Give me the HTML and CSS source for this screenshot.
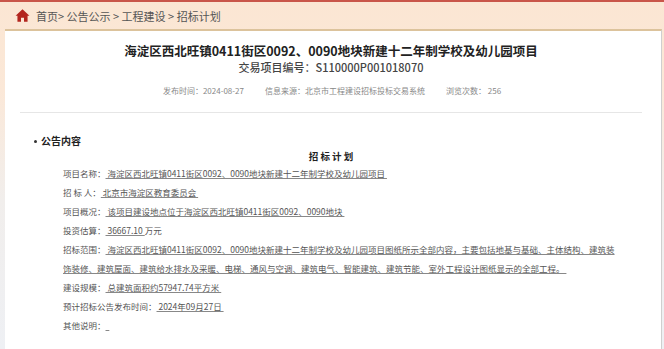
FILE: index.html
```html
<!DOCTYPE html>
<html lang="zh">
<head>
<meta charset="utf-8">
<title>招标计划</title>
<link rel="stylesheet" href="styles.css">
</head>
<body>
<div class="topline"></div>
<div class="crumb">
  <svg class="home" viewBox="0 0 16 16" width="15" height="15"><path d="M8 1.2 L0.6 8.2 L2.6 8.2 L2.6 14.6 L6.4 14.6 L6.4 10.4 L9.6 10.4 L9.6 14.6 L13.4 14.6 L13.4 8.2 L15.4 8.2 Z" fill="#b3261e"/></svg>
  <span>首页&gt; 公告公示 &gt; 工程建设 &gt; 招标计划</span>
</div>
<div class="card">
  <div class="head">
    <h1 class="title">海淀区西北旺镇0411街区0092、0090地块新建十二年制学校及幼儿园项目</h1>
    <div class="code">交易项目编号：S110000P001018070</div>
    <div class="meta">
      <span>发布时间：2024-08-27</span>
      <span>信息来源：北京市工程建设招标投标交易系统</span>
      <span>浏览次数：&nbsp;256</span>
    </div>
  </div>
  <div class="section">
    <div class="sec-title"><span class="dot"></span>公告内容</div>
    <div class="doc-title">招 标 计 划</div>
    <div class="rows">
      <p>项目名称：<u>&nbsp;海淀区西北旺镇0411街区0092、0090地块新建十二年制学校及幼儿园项目&nbsp;</u></p>
      <p>招 标 人：<u>&nbsp;北京市海淀区教育委员会&nbsp;</u></p>
      <p>项目概况：<u>&nbsp;该项目建设地点位于海淀区西北旺镇0411街区0092、0090地块&nbsp;</u></p>
      <p>投资估算：<u>&nbsp;36667.10&nbsp;</u>万元</p>
      <p>招标范围：<u>&nbsp;海淀区西北旺镇0411街区0092、0090地块新建十二年制学校及幼儿园项目图纸所示全部内容，主要包括地基与基础、主体结构、建筑装饰装修、建筑屋面、建筑给水排水及采暖、电梯、通风与空调、建筑电气、智能建筑、建筑节能、室外工程设计图纸显示的全部工程。&nbsp;</u></p>
      <p>建设规模：<u>&nbsp;总建筑面积约57947.74平方米&nbsp;</u></p>
      <p>预计招标公告发布时间：<u>&nbsp;2024年09月27日&nbsp;</u></p>
      <p>其他说明：<u>&nbsp;&nbsp;</u></p>
    </div>
  </div>
</div>
</body>
</html>
```
FILE: styles.css
```css
html, body {
  margin: 0;
  padding: 0;
  height: 100%;
  overflow: hidden;
}
body {
  font-family: "Noto Sans CJK SC", "Noto Sans", sans-serif;
  background: linear-gradient(180deg, #fbe6d3 0px, #fbe8d8 90px, #f1eeec 200px, #eef0f4 349px);
  color: #333;
  display: flex;
  flex-direction: column;
}
.topline {
  height: 2px;
  background: #c9564a;
  flex: none;
}
.crumb {
  flex: none;
  height: 27px;
  display: flex;
  align-items: center;
  padding-left: 15px;
  font-size: 11px;
  color: #555;
  gap: 6px;
}
.home {
  display: block;
}
.card {
  flex: 1;
  min-height: 0;
  overflow: hidden;
  margin-left: 5px;
  margin-right: 2px;
  background: #fff;
  border-top: 2px solid #dcc39c;
  border-right: 1px solid #cfcfcf;
  padding: 0 19px 0 15px;
}
.head {
  text-align: center;
  border-bottom: 1px solid #e6e6e6;
  padding-top: 12px;
  padding-bottom: 15px;
}
.title {
  margin: 0;
  font-size: 12.5px;
  font-weight: 700;
  color: #222;
  line-height: 16px;
}
.code {
  font-size: 11px;
  font-weight: 500;
  color: #444;
  line-height: 17px;
}
.meta {
  margin-top: 9px;
  font-size: 8px;
  color: #888;
  display: flex;
  justify-content: center;
  gap: 21px;
  line-height: 12px;
  padding-left: 2px;
}
.section {
  padding-top: 21px;
}
.sec-title {
  display: flex;
  align-items: center;
  font-size: 10px;
  font-weight: 700;
  color: #222;
  padding-left: 14px;
  line-height: 14px;
}
.dot {
  width: 3px;
  height: 3px;
  border-radius: 50%;
  background: #333;
  margin-right: 4px;
}
.doc-title {
  text-align: center;
  font-size: 9.5px;
  font-weight: 700;
  color: #222;
  line-height: 16px;
  margin-top: 0;
}
.rows {
  padding-left: 43px;
  padding-right: 20px;
  font-size: 8.5px;
  color: #555;
}
.rows p {
  margin: 0;
  line-height: 19px;
}
.rows u {
  text-decoration-color: #888;
  text-underline-offset: 1px;
}
```
